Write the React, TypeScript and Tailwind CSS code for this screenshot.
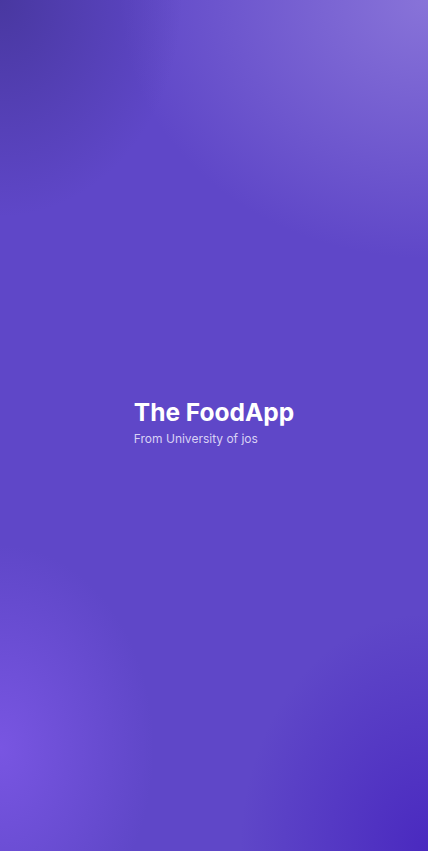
export default function App() {
  return (
    <main className="relative h-[851px] w-full overflow-hidden bg-[#5f47c8] font-['Inter',sans-serif]">
      {/* Background glow layers */}
      <div className="absolute inset-0 bg-[radial-gradient(ellipse_90%_38%_at_100%_0%,rgba(150,130,222,0.75),transparent_80%)]" />
      <div className="absolute inset-0 bg-[radial-gradient(ellipse_50%_30%_at_0%_0%,rgba(70,54,156,0.9),transparent_85%)]" />
      <div className="absolute inset-0 bg-[radial-gradient(ellipse_45%_30%_at_0%_88%,rgba(125,88,230,0.85),transparent_80%)]" />
      <div className="absolute inset-0 bg-[radial-gradient(ellipse_55%_35%_at_100%_100%,rgba(70,36,190,0.85),transparent_80%)]" />

      {/* Title */}
      <div className="relative z-10 flex h-full items-center justify-center">
        <div className="-mt-[6px] flex flex-col">
          <h1 className="text-[24.5px] font-bold leading-[28px] text-white">
            The FoodApp
          </h1>
          <p className="mt-[5px] text-[12px] leading-[16px] text-[#d9d2f5]">
            From University of jos
          </p>
        </div>
      </div>
    </main>
  );
}
